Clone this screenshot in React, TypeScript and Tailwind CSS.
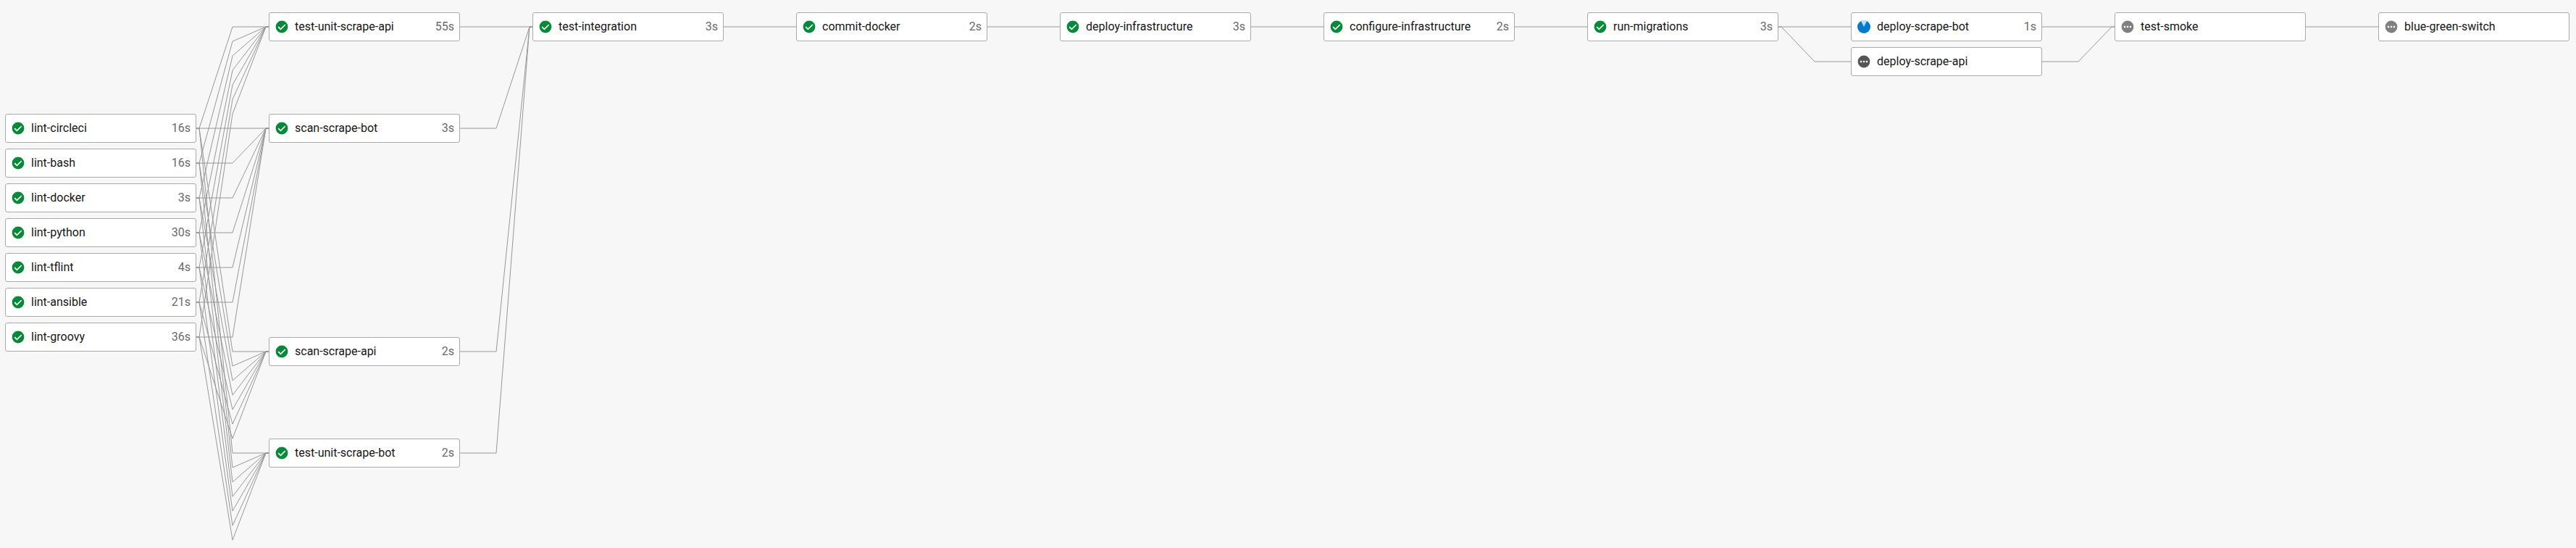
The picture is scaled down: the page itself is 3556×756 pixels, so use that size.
import React from "react";

type Status = "success" | "running" | "queued" | "blocked";
type Job = { name: string; time?: string; status: Status; gap?: string };
type Point = [number, number];

const stages: { top: string; jobs: Job[] }[] = [
  {
    top: "pt-[157px]",
    jobs: [
      { name: "lint-circleci", time: "16s", status: "success" },
      { name: "lint-bash", time: "16s", status: "success" },
      { name: "lint-docker", time: "3s", status: "success" },
      { name: "lint-python", time: "30s", status: "success" },
      { name: "lint-tflint", time: "4s", status: "success" },
      { name: "lint-ansible", time: "21s", status: "success" },
      { name: "lint-groovy", time: "36s", status: "success" },
    ],
  },
  {
    top: "pt-[17px]",
    jobs: [
      { name: "test-unit-scrape-api", time: "55s", status: "success", gap: "mb-[92px]" },
      { name: "scan-scrape-bot", time: "3s", status: "success", gap: "mb-[260px]" },
      { name: "scan-scrape-api", time: "2s", status: "success", gap: "mb-[92px]" },
      { name: "test-unit-scrape-bot", time: "2s", status: "success" },
    ],
  },
  { top: "pt-[17px]", jobs: [{ name: "test-integration", time: "3s", status: "success" }] },
  { top: "pt-[17px]", jobs: [{ name: "commit-docker", time: "2s", status: "success" }] },
  { top: "pt-[17px]", jobs: [{ name: "deploy-infrastructure", time: "3s", status: "success" }] },
  { top: "pt-[17px]", jobs: [{ name: "configure-infrastructure", time: "2s", status: "success" }] },
  { top: "pt-[17px]", jobs: [{ name: "run-migrations", time: "3s", status: "success" }] },
  {
    top: "pt-[17px]",
    jobs: [
      { name: "deploy-scrape-bot", time: "1s", status: "running" },
      { name: "deploy-scrape-api", status: "queued" },
    ],
  },
  { top: "pt-[17px]", jobs: [{ name: "test-smoke", status: "blocked" }] },
  { top: "pt-[17px]", jobs: [{ name: "blue-green-switch", status: "blocked" }] },
];

// Each edge leaves a job, bends half way across the gutter and enters the next job.
const edge = (from: number, bend: number, to: number): Point[] => [
  [0, from],
  [4, from],
  [50, bend],
  [96, to],
  [100, to],
];

const lintRows = [0, 1, 2, 3, 4, 5, 6];
const straight = [edge(37, 37, 37)];

const gutters: Point[][][] = [
  lintRows.flatMap((i) => {
    const y = 177 + 48 * i;
    return [
      edge(y, 37 + 20 * i, 37),
      edge(y, y, 177),
      edge(y, 485 + 20 * i, 485),
      edge(y, 625 + 20 * i, 625),
    ];
  }),
  [edge(37, 37, 37), edge(177, 177, 37), edge(485, 485, 37), edge(625, 625, 37)],
  straight,
  straight,
  straight,
  straight,
  [edge(37, 37, 37), edge(37, 85, 85)],
  [edge(37, 37, 37), edge(85, 85, 37)],
  straight,
];

function StatusIcon({ status }: { status: Status }) {
  if (status === "success") {
    return (
      <svg viewBox="0 0 18 18" className="size-[18px] shrink-0">
        <circle cx="9" cy="9" r="8.4" fill="#048a38" />
        <path d="M4.2 9.2 7.4 12.4 13.8 6" fill="none" stroke="#fff" strokeWidth="1.7" />
      </svg>
    );
  }
  if (status === "running") {
    return (
      <svg viewBox="0 0 18 18" className="size-[18px] shrink-0">
        <circle cx="9" cy="9" r="9" fill="#007acf" />
        <path d="M9 9 5 .9A9 9 0 0 1 13 .9Z" fill="#b4e2fb" />
      </svg>
    );
  }
  return (
    <svg viewBox="0 0 18 18" className="size-[18px] shrink-0">
      <circle cx="9" cy="9" r="8.4" fill={status === "queued" ? "#555555" : "#808080"} />
      <circle cx="5" cy="9" r="1.3" fill="#fff" />
      <circle cx="9" cy="9" r="1.3" fill="#fff" />
      <circle cx="13" cy="9" r="1.3" fill="#fff" />
    </svg>
  );
}

function JobCard({ job }: { job: Job }) {
  return (
    <div
      className={`flex h-10 w-[264px] items-center rounded-[3px] border border-[#aaaaaa] bg-white pr-[7px] pl-2 text-base leading-5 ${job.gap ?? ""}`}
    >
      <StatusIcon status={job.status} />
      <span className="ml-[9px] grow whitespace-nowrap text-[#161616]">{job.name}</span>
      <span className="text-[#6a6a6a]">{job.time}</span>
    </div>
  );
}

function Gutter({ edges }: { edges: Point[][] }) {
  return (
    <svg width="100" height="756" viewBox="0 0 100 756" className="shrink-0">
      {edges.map((points, i) => (
        <polyline key={i} points={points.map((p) => p.join(",")).join(" ")} fill="none" stroke="#979797" strokeWidth="1" />
      ))}
    </svg>
  );
}

export default function App() {
  return (
    <main className="flex h-[756px] w-[3556px] overflow-hidden bg-[#f7f7f7] pl-[7px] font-['Roboto',sans-serif]">
      {stages.map((stage, i) => (
        <React.Fragment key={i}>
          <section className={`flex shrink-0 flex-col gap-2 ${stage.top}`}>
            {stage.jobs.map((job) => (
              <JobCard key={job.name} job={job} />
            ))}
          </section>
          {gutters[i] && <Gutter edges={gutters[i]} />}
        </React.Fragment>
      ))}
    </main>
  );
}
